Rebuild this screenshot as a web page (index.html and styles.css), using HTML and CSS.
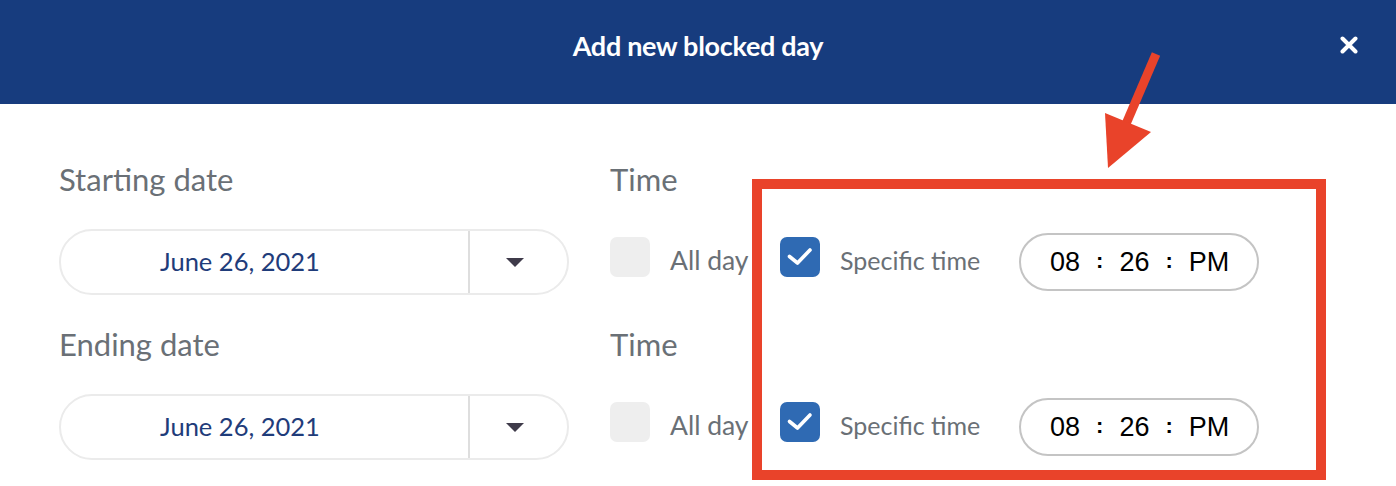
FILE: index.html
```html
<!DOCTYPE html>
<html lang="en">
<head>
<meta charset="utf-8">
<title>Add new blocked day</title>
<link rel="stylesheet" href="styles.css">
</head>
<body>
<div class="modal">
  <header class="modal-header">
    <h1 class="modal-title">Add new blocked day</h1>
    <button class="close-btn" aria-label="Close">
      <svg width="18" height="18" viewBox="0 0 18 18"><path d="M2.5 2.5 L15.5 15.5 M15.5 2.5 L2.5 15.5" stroke="#fff" stroke-width="4" stroke-linecap="round"/></svg>
    </button>
  </header>
  <main class="form">
    <div class="row">
      <div class="field date-field">
        <div class="label">Starting date</div>
        <div class="date-select">
          <span class="date-value">June 26, 2021</span>
          <span class="caret-wrap"><span class="caret"></span></span>
        </div>
      </div>
      <div class="field time-field">
        <div class="label">Time</div>
        <div class="time-controls">
          <span class="checkbox"></span>
          <span class="opt-label opt-allday">All day</span>
          <span class="checkbox checked"><svg width="40" height="40" viewBox="0 0 40 40"><path d="M9.5 19.5 L17.5 26 L30 13" fill="none" stroke="#fff" stroke-width="3.6" stroke-linecap="round" stroke-linejoin="round"/></svg></span>
          <span class="opt-label opt-specific">Specific time</span>
          <div class="time-input"><span>08</span><span class="sep">:</span><span>26</span><span class="sep">:</span><span>PM</span></div>
        </div>
      </div>
    </div>
    <div class="row">
      <div class="field date-field">
        <div class="label">Ending date</div>
        <div class="date-select">
          <span class="date-value">June 26, 2021</span>
          <span class="caret-wrap"><span class="caret"></span></span>
        </div>
      </div>
      <div class="field time-field">
        <div class="label">Time</div>
        <div class="time-controls">
          <span class="checkbox"></span>
          <span class="opt-label opt-allday">All day</span>
          <span class="checkbox checked"><svg width="40" height="40" viewBox="0 0 40 40"><path d="M9.5 19.5 L17.5 26 L30 13" fill="none" stroke="#fff" stroke-width="3.6" stroke-linecap="round" stroke-linejoin="round"/></svg></span>
          <span class="opt-label opt-specific">Specific time</span>
          <div class="time-input"><span>08</span><span class="sep">:</span><span>26</span><span class="sep">:</span><span>PM</span></div>
        </div>
      </div>
    </div>
  </main>
  <svg class="annotation" width="1396" height="486" viewBox="0 0 1396 486">
    <rect x="757" y="184" width="564" height="291" fill="none" stroke="#e9432a" stroke-width="10"/>
    <line x1="1156" y1="54" x2="1126" y2="124" stroke="#e9432a" stroke-width="9"/>
    <polygon points="1105,113 1151,132 1108,168" fill="#e9432a"/>
  </svg>
</div>
</body>
</html>
```
FILE: styles.css
```css
* { box-sizing: border-box; }
html, body { margin: 0; padding: 0; background: #fff; }
body { font-family: Lato, "Noto Sans", sans-serif; width: 1396px; height: 486px; overflow: hidden; }

.modal { position: relative; width: 1396px; height: 486px; }

.modal-header {
  height: 104px;
  background: #173c7e;
  display: flex;
  align-items: center;
  justify-content: center;
  position: relative;
}
.modal-title {
  margin: 0 0 14px 0;
  color: #fff;
  font-size: 27px;
  font-weight: 700;
  letter-spacing: -0.3px;
}
.close-btn {
  position: absolute;
  right: 38px;
  top: 36px;
  width: 18px;
  height: 18px;
  padding: 0;
  border: 0;
  background: none;
  display: flex;
}

.form { padding: 55px 0 0 59px; display: flex; flex-direction: column; gap: 29px; }
.row { display: flex; gap: 41px; }
.field { display: flex; flex-direction: column; gap: 30px; }
.date-field { width: 510px; }

.label {
  height: 40px;
  line-height: 40px;
  font-size: 31px;
  color: #6a7076;
}

.date-select {
  height: 66px;
  border: 2px solid #ebebeb;
  border-radius: 33px;
  display: flex;
  align-items: stretch;
}
.date-value {
  flex: 1;
  padding-left: 99px;
  padding-bottom: 3px;
  display: flex;
  align-items: center;
  font-size: 25.5px;
  color: #1f3c7a;
  border-right: 2px solid #dedede;
}
.caret-wrap {
  width: 97px;
  display: flex;
  align-items: center;
  justify-content: center;
  padding-right: 8px;
}
.caret {
  width: 0; height: 0;
  border-left: 9.5px solid transparent;
  border-right: 9.5px solid transparent;
  border-top: 9px solid #3f3b4a;
}

.time-controls {
  height: 66px;
  display: flex;
  align-items: center;
}
.checkbox {
  width: 40px;
  height: 40px;
  border-radius: 7px;
  background: #eeeeee;
  margin-bottom: 10px;
  display: flex;
  align-items: center;
  justify-content: center;
  flex: none;
}
.checkbox.checked { background: #2f6ab3; }
.opt-label {
  font-size: 25px;
  color: #6a7076;
  margin-left: 20px;
  padding-bottom: 4px;
  white-space: nowrap;
  flex: none;
}
.opt-allday { width: 110px; font-size: 26.5px; }
.opt-specific { width: 139px; }
.time-input {
  margin-left: 40px;
  width: 240px;
  height: 58px;
  border: 2px solid #c4c4c4;
  border-radius: 29px;
  display: flex;
  align-items: center;
  gap: 16px;
  padding-left: 29px;
  font-family: "Liberation Sans", Arial, sans-serif;
  font-size: 27px;
  color: #000;
  flex: none;
}
.time-input .sep { font-size: 22px; font-weight: 700; position: relative; top: -1px; }

.annotation { position: absolute; left: 0; top: 0; pointer-events: none; }
```
